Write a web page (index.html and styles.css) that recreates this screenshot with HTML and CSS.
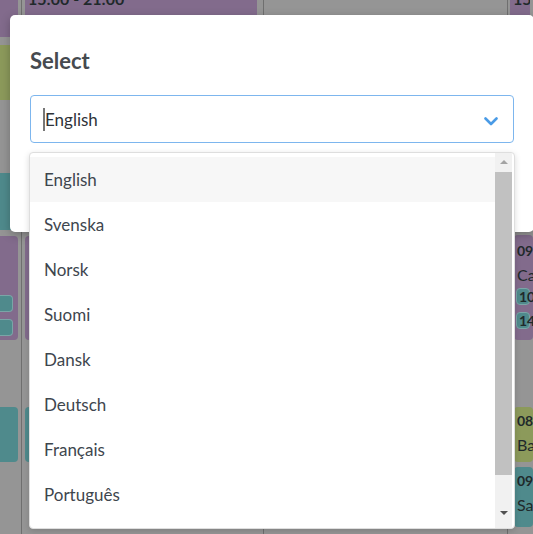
FILE: index.html
```html
<!DOCTYPE html>
<html lang="en">
<head>
  <meta charset="UTF-8">
  <meta name="viewport" content="width=device-width, initial-scale=1.0">
  <title>Select language</title>
  <link rel="stylesheet" href="styles.css">
</head>
<body>
  <div class="calendar">
    <div class="col col-a">
      <div class="card purple top"></div>
      <div class="card olive c2"></div>
      <div class="card teal c3"></div>
      <div class="card purple c4">
        <span class="chip"></span>
        <span class="chip"></span>
      </div>
      <div class="card teal c5"></div>
    </div>
    <div class="col col-b">
      <div class="card purple top"><b>15:00 - 21:00</b></div>
      <div class="card olive c2"></div>
      <div class="card teal c3"></div>
      <div class="card purple c4"></div>
      <div class="card teal c5"></div>
    </div>
    <div class="col col-c"></div>
    <div class="col col-d">
      <div class="card purple top"><b>15:00 - 21:00</b></div>
      <div class="card purple d2">
        <b>09:00 - 15:00</b>
        <span class="name">Café</span>
        <span class="chip"><b>10:00 - 11:00</b></span>
        <span class="chip"><b>14:00 - 14:30</b></span>
      </div>
      <div class="card olive d3">
        <b>08:00 - 12:00</b>
        <span class="name">Bageri</span>
      </div>
      <div class="card teal d4">
        <b>09:00 - 16:00</b>
        <span class="name">Salong</span>
      </div>
    </div>
  </div>

  <div class="modal">
    <h2>Select</h2>
    <div class="select">
      <span class="caret"></span>
      <span class="value">English</span>
      <svg class="chevron" width="14" height="9" viewBox="0 0 14 9">
        <polyline points="1.5,1.5 7,7 12.5,1.5" fill="none" stroke="#4a9be6" stroke-width="2.6" stroke-linecap="round" stroke-linejoin="round"/>
      </svg>
    </div>

    <div class="dropdown">
      <ul class="options">
        <li class="active">English</li>
        <li>Svenska</li>
        <li>Norsk</li>
        <li>Suomi</li>
        <li>Dansk</li>
        <li>Deutsch</li>
        <li>Français</li>
        <li>Português</li>
      </ul>
      <div class="scrollbar">
        <span class="arrow up"></span>
        <span class="thumb"></span>
        <span class="arrow down"></span>
      </div>
    </div>
  </div>
</body>
</html>
```

FILE: styles.css
```css
* {
  margin: 0;
  padding: 0;
  box-sizing: border-box;
}

html, body {
  width: 100%;
  height: 100%;
  overflow: hidden;
}

body {
  position: relative;
  font-family: Lato, "Liberation Sans", sans-serif;
  background-color: #959595;
}

/* dimmed calendar behind the modal */

.calendar {
  display: flex;
  height: 534px;
  overflow: hidden;
}

.col {
  display: flex;
  flex-direction: column;
  border-right: 1px solid #6f6f6f;
  flex-shrink: 0;
}

.col-a {
  width: 22px;
}

.col-b {
  width: 242px;
  padding-left: 3px;
}

.col-c {
  width: 244px;
}

.col-d {
  flex: 1;
  border-right: none;
  white-space: nowrap;
  overflow: hidden;
}

.card {
  display: flex;
  flex-direction: column;
  margin-right: 3px;
  border-radius: 4px;
  padding: 4px 3px;
  font-size: 16px;
  line-height: 20px;
  color: #1f292b;
  overflow: hidden;
  white-space: nowrap;
}

.col-a .card {
  border-radius: 0 4px 4px 0;
  padding: 4px 5px 4px 0;
}

.col-b .card {
  margin-right: 6px;
}

.purple {
  background-color: #826b8c;
}

.olive {
  background-color: #8c9a5b;
}

.teal {
  background-color: #4f8a8c;
}

.top {
  margin-top: -15px;
  height: 52px;
}

.c2 {
  margin-top: 8px;
  height: 55px;
}

.c3 {
  margin-top: 73px;
  height: 57px;
}

.c4 {
  margin-top: 6px;
  height: 104px;
  justify-content: flex-end;
  gap: 7px;
  padding-bottom: 8px;
}

.c5 {
  margin-top: 67px;
  height: 55px;
}

.col-d .top {
  margin-left: 2px;
}

.col-d .card b {
  font-size: 14px;
}

.col-d .top b {
  font-size: 16px;
}

.d2 {
  margin: 198px 0 0 6px;
  height: 105px;
  padding-top: 6px;
}

.d3 {
  margin: 67px 0 0 6px;
  height: 55px;
}

.d4 {
  margin: 5px 0 0 6px;
  height: 60px;
}

.name {
  line-height: 22px;
  margin-top: 3px;
}

.chip {
  display: block;
  height: 17px;
  border: 1px solid #7aa5a7;
  border-radius: 4px;
  background-color: #4f8a8c;
  font-size: 14px;
  line-height: 15px;
  padding-left: 2px;
}

.col-a .chip {
  border-left: none;
  border-radius: 0 4px 4px 0;
}

.d2 .chip {
  margin: 2px 0 5px -1px;
}

/* modal */

.modal {
  position: absolute;
  left: 10px;
  top: 15px;
  width: 524px;
  height: 217px;
  padding: 32px 20px 0;
  background-color: #fff;
  border-radius: 5px;
  box-shadow: 0 3px 10px rgba(0, 0, 0, .25);
}

.modal h2 {
  font-size: 22px;
  line-height: 28px;
  font-weight: bold;
  color: #464a4f;
}

.select {
  display: flex;
  align-items: center;
  height: 48px;
  margin-top: 20px;
  padding: 0 15px 0 12px;
  border: 1px solid #7db6ee;
  border-radius: 4px;
  font-size: 17px;
  color: #2f3338;
}

.caret {
  width: 2px;
  height: 23px;
  background-color: #777;
}

.value {
  flex: 1;
}

.chevron {
  margin-top: 4px;
}

.dropdown {
  position: absolute;
  left: 19px;
  top: 137px;
  width: 486px;
  height: 377px;
  display: flex;
  background-color: #fff;
  border: 1px solid #dedede;
  border-radius: 4px;
  box-shadow: 0 2px 6px rgba(0, 0, 0, .15);
  overflow: hidden;
  padding-right: 2px;
}

.options {
  flex: 1;
  list-style: none;
  padding-top: 4px;
}

.options li {
  height: 45px;
  line-height: 45px;
  padding-left: 14px;
  font-size: 17px;
  color: #3e464e;
}

.options li.active {
  background-color: #f7f7f7;
}

.scrollbar {
  display: flex;
  flex-direction: column;
  align-items: center;
  width: 17px;
  background-color: #f1f1f1;
}

.arrow {
  width: 0;
  height: 0;
  border-left: 4px solid transparent;
  border-right: 4px solid transparent;
}

.arrow.up {
  margin: 7px 0 8px;
  border-bottom: 4px solid #a3a3a3;
}

.arrow.down {
  margin-top: 36px;
  border-top: 4px solid #505050;
}

.thumb {
  width: 17px;
  height: 303px;
  background-color: #c1c1c1;
}
```
